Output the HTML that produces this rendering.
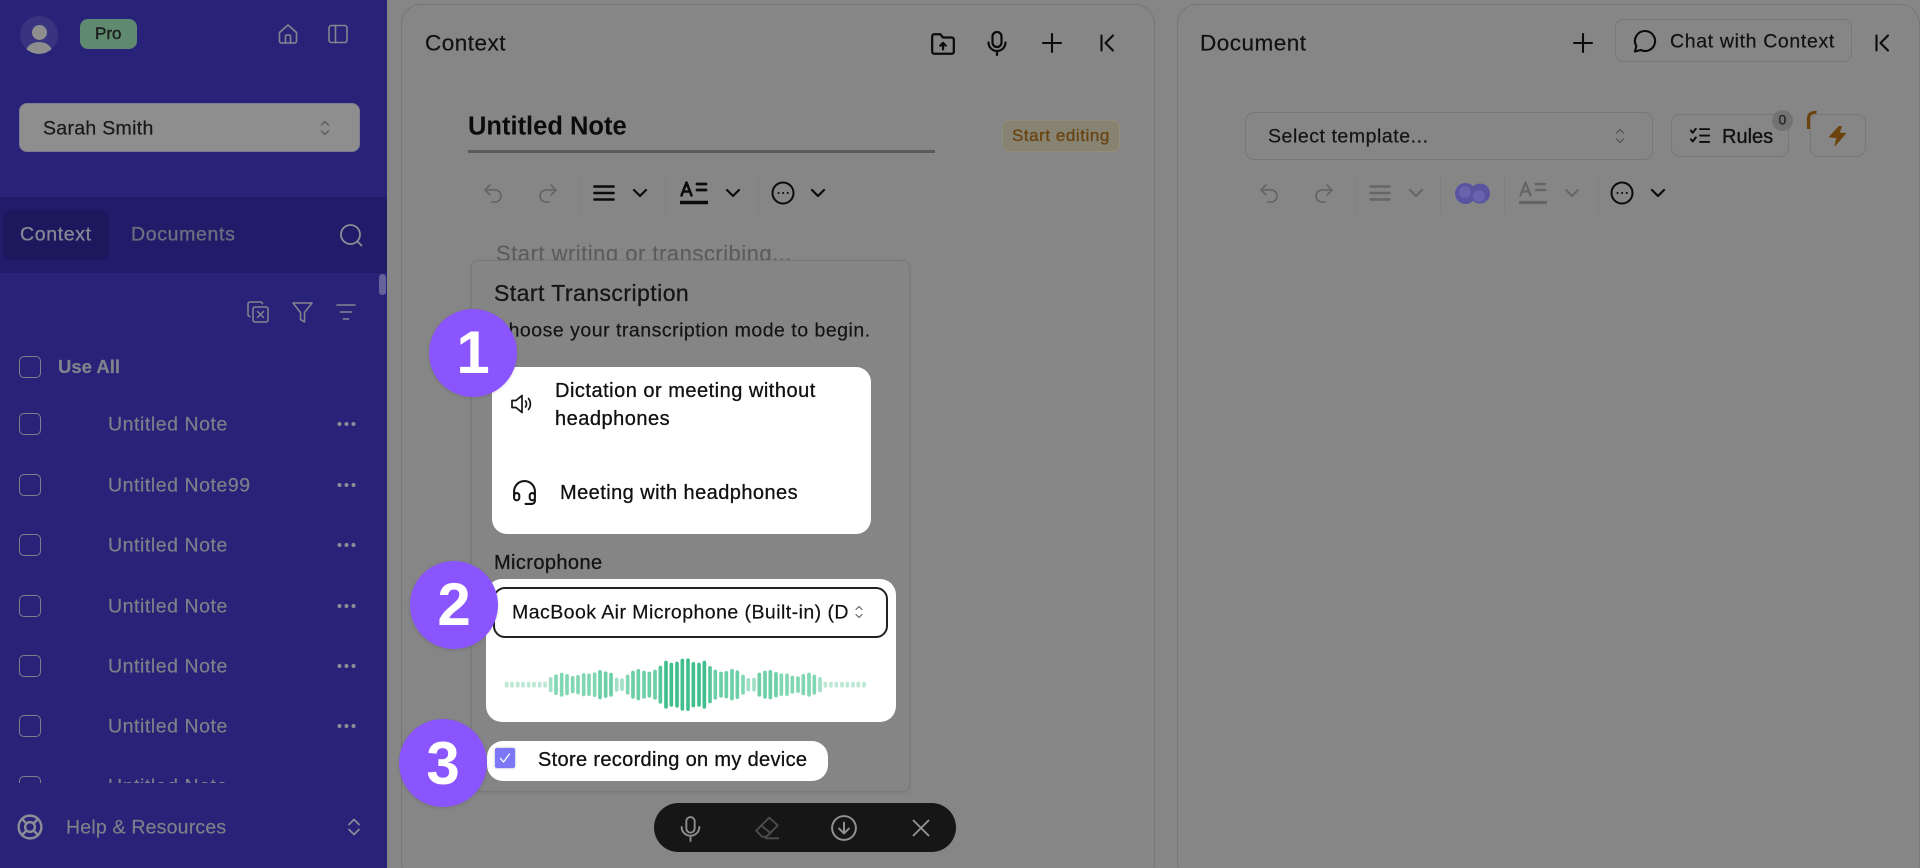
<!DOCTYPE html>
<html lang="en"><head><meta charset="utf-8"><title>Transcription</title>
<style>
html,body{margin:0;padding:0;width:1920px;height:868px;overflow:hidden;background:#868686}
body{position:relative;font-family:"Liberation Sans",sans-serif;color:#141414}
.t{position:absolute;white-space:nowrap;transform:translateY(-50%);line-height:1.2;-webkit-text-stroke:.2px currentColor}
.b{position:absolute;box-sizing:border-box}
svg.i{position:absolute;width:24px;height:24px;overflow:visible;fill:none;stroke-linecap:round;stroke-linejoin:round}
.side{color:#7f7f8a;font-size:19.5px;letter-spacing:.55px}
.cb{position:absolute;left:19px;width:22px;height:22px;box-sizing:border-box;border:1.5px solid #7f7f8a;border-radius:5px}
.num{position:absolute;width:88px;height:88px;border-radius:50%;background:#8a55fe;color:#fff;font-weight:700;font-size:60px;line-height:88px;text-align:center;box-shadow:0 1px 3px rgba(0,0,0,.12)}
.sep{position:absolute;top:175px;height:38px;width:1px;background:#7f7f7f}
</style></head><body>

<!-- sidebar -->
<div class="b" style="left:0;top:0;width:387px;height:868px;background:#282378"></div>
<div class="b" style="left:20px;top:16px;width:38px;height:38px;border-radius:50%;background:#38347f;overflow:hidden">
  <div class="b" style="left:11.5px;top:9px;width:15px;height:15px;border-radius:50%;background:#8e8e8e"></div>
  <div class="b" style="left:6px;top:26px;width:26px;height:20px;border-radius:50%;background:#8e8e8e"></div>
</div>
<div class="b" style="left:80px;top:19px;width:57px;height:30px;border-radius:8px;background:#5f8a6f"></div>
<div class="t" style="left:95px;top:34px;font-size:17px;color:#1c1c1c;-webkit-text-stroke:.4px #1c1c1c">Pro</div>
<svg class="i" style="left:276px;top:22px" viewBox="0 0 24 24" stroke="#85858f" stroke-width="1.6"><path d="M3.5 10.500 12 3l8.500 7.500V19a2 2 0 0 1-2 2h-13a2 2 0 0 1-2-2z"/><path d="M9.500 21v-7a1 1 0 0 1 1-1h3a1 1 0 0 1 1 1v7"/></svg>
<svg class="i" style="left:326px;top:22px" viewBox="0 0 24 24" stroke="#85858f" stroke-width="1.6"><rect x="3" y="3.5" width="18" height="17" rx="2.5"/><path d="M9.500 3.500v17"/></svg>

<div class="b" style="left:19px;top:103px;width:341px;height:49px;border-radius:8px;background:#8e8e8e;border:1px solid #7c7c90"></div>
<div class="t" style="left:43px;top:128.5px;font-size:19.5px;letter-spacing:.3px;color:#181818">Sarah Smith</div>
<svg class="i" style="left:313px;top:116px" viewBox="0 0 24 24" stroke="#505050" stroke-width="1.2"><path d="M8.500 9 12 5.500 15.500 9M8.500 15l3.500 3.500 3.500-3.500"/></svg>

<div class="b" style="left:0;top:197px;width:387px;height:76px;background:#201c6a"></div>
<div class="b" style="left:3px;top:210px;width:106px;height:50px;border-radius:9px;background:#1c185e"></div>
<div class="t side" style="left:20px;top:235px;-webkit-text-stroke:.35px #868694;color:#868694;letter-spacing:.65px">Context</div>
<div class="t side" style="left:131px;top:235px;-webkit-text-stroke:.35px #6d6d80;color:#6d6d80;letter-spacing:.65px">Documents</div>
<svg class="i" style="left:339px;top:223px" viewBox="0 0 24 24" stroke="#8d8d98" stroke-width="1.8"><circle cx="11.5" cy="11.5" r="9.5"/><path d="m18.500 18.500 4 4"/></svg>
<div class="b" style="left:379px;top:274px;width:7px;height:21px;border-radius:4px;background:#66639c"></div>

<svg class="i" style="left:246px;top:300px" viewBox="0 0 24 24" stroke="#85858f" stroke-width="1.5"><path d="M4 16.500c-1 0-2-1-2-2V4c0-1.100 1-2 2-2h10.500c1 0 1.800.7 2 1.700"/><rect x="7" y="7" width="15" height="15" rx="2"/><path d="m11.500 11.500 6 6M17.500 11.500l-6 6"/></svg>
<svg class="i" style="left:290px;top:300px" viewBox="0 0 24 24" stroke="#85858f" stroke-width="1.5"><path d="M3 3h19l-7.500 9.500V22l-4-2.500v-7z"/></svg>
<svg class="i" style="left:334px;top:300px" viewBox="0 0 24 24" stroke="#85858f" stroke-width="1.6"><path d="M3 5h18M6.500 12h11M9.500 19h5"/></svg>

<div class="cb" style="top:356px"></div>
<div class="t" style="left:58px;top:367px;font-size:18.5px;font-weight:700;color:#82828c">Use All</div>

<div class="cb" style="top:413px"></div><div class="t side" style="left:108px;top:425px">Untitled Note</div>
<div class="cb" style="top:474px"></div><div class="t side" style="left:108px;top:486px">Untitled Note99</div>
<div class="cb" style="top:534px"></div><div class="t side" style="left:108px;top:546px">Untitled Note</div>
<div class="cb" style="top:595px"></div><div class="t side" style="left:108px;top:607px">Untitled Note</div>
<div class="cb" style="top:655px"></div><div class="t side" style="left:108px;top:667px">Untitled Note</div>
<div class="cb" style="top:715px"></div><div class="t side" style="left:108px;top:727px">Untitled Note</div>

<svg style="position:absolute;left:336px;top:415px;width:22px;height:320px" viewBox="0 0 22 320" fill="#8d8d98">
<circle cx="3.5" cy="9" r="2"/><circle cx="10.5" cy="9" r="2"/><circle cx="17.5" cy="9" r="2"/>
<circle cx="3.5" cy="70" r="2"/><circle cx="10.5" cy="70" r="2"/><circle cx="17.5" cy="70" r="2"/>
<circle cx="3.5" cy="130" r="2"/><circle cx="10.5" cy="130" r="2"/><circle cx="17.5" cy="130" r="2"/>
<circle cx="3.5" cy="191" r="2"/><circle cx="10.5" cy="191" r="2"/><circle cx="17.5" cy="191" r="2"/>
<circle cx="3.5" cy="251" r="2"/><circle cx="10.5" cy="251" r="2"/><circle cx="17.5" cy="251" r="2"/>
<circle cx="3.5" cy="311" r="2"/><circle cx="10.5" cy="311" r="2"/><circle cx="17.5" cy="311" r="2"/>
</svg>

<!-- clipped next row -->
<div class="b" style="left:0;top:776px;width:387px;height:7px;overflow:hidden">
  <div class="cb" style="top:0"></div>
  <div class="t side" style="left:108px;top:11px">Untitled Note</div>
</div>

<svg class="i" style="left:17px;top:814px;width:26px;height:26px" viewBox="0 0 24 24" stroke="#8d8d98" stroke-width="2.2"><circle cx="12" cy="12" r="10.5"/><circle cx="12" cy="12" r="4.5"/><path d="m4.500 4.500 4.300 4.300M19.500 4.500l-4.300 4.300M4.500 19.500l4.300-4.300M19.500 19.500l-4.300-4.300"/></svg>
<div class="t side" style="left:66px;top:827.5px;letter-spacing:.2px">Help &amp; Resources</div>
<svg class="i" style="left:342px;top:815px" viewBox="0 0 24 24" stroke="#8d8d98" stroke-width="1.7"><path d="M7 9.500 12 4.500l5 5M7 14.500l5 5 5-5"/></svg>

<!-- panels -->
<div class="b" style="left:401px;top:4px;width:754px;height:880px;border:1px solid #777;border-radius:20px"></div>
<div class="b" style="left:1177px;top:4px;width:743px;height:880px;border:1px solid #777;border-radius:20px"></div>

<!-- context header -->
<div class="t" style="left:425px;top:43px;font-size:22.5px;letter-spacing:.5px;color:#111">Context</div>
<svg class="i" style="left:930px;top:31px;width:26px;height:26px" viewBox="0 0 24 24" stroke="#0b0b0b" stroke-width="2.1"><path d="M2 5c0-1 .8-2 2-2h5.500l2.500 3h8c1.200 0 2 .9 2 2v11c0 1.100-.8 2-2 2H4c-1.200 0-2-.9-2-2z"/><path d="M12 17v-6M9.500 13.500 12 11l2.500 2.500"/></svg>
<svg class="i" style="left:985px;top:31px" viewBox="0 0 24 24" stroke="#0b0b0b" stroke-width="2.2"><rect x="7.5" y="1" width="9" height="15" rx="4.5"/><path d="M3.500 11.500a8.500 8.500 0 0 0 17 0M12 20v4"/></svg>
<svg class="i" style="left:1040px;top:31px" viewBox="0 0 24 24" stroke="#0b0b0b" stroke-width="2.1"><path d="M12 3v18M3 12h18"/></svg>
<svg class="i" style="left:1095px;top:31px" viewBox="0 0 24 24" stroke="#0b0b0b" stroke-width="2.1"><path d="M6.500 4.500v15M18 4.500 10.500 12l7.500 7.500"/></svg>

<div class="t" style="left:468px;top:127px;font-size:25.5px;font-weight:700;color:#0b0b0b;-webkit-text-stroke:0">Untitled Note</div>
<div class="b" style="left:468px;top:150px;width:467px;height:3px;background:#5a5a5a"></div>
<div class="b" style="left:1002px;top:120px;width:118px;height:32px;border-radius:7px;background:#878372;border:1px solid #918e76"></div>
<div class="t" style="left:1012px;top:136px;font-size:17px;letter-spacing:.55px;color:#6a430f;-webkit-text-stroke:.3px #6a430f">Start editing</div>

<!-- left toolbar -->
<svg class="i" style="left:481px;top:181px" viewBox="0 0 24 24" stroke="#656565" stroke-width="1.7"><path d="M9 4 4 9l5 5"/><path d="M4 9h10a6 6 0 0 1 0 12h-3"/></svg>
<svg class="i" style="left:536px;top:181px" viewBox="0 0 24 24" stroke="#656565" stroke-width="1.7"><path d="m15 4 5 5-5 5"/><path d="M20 9H10a6 6 0 0 0 0 12h3"/></svg>
<div class="sep" style="left:579px"></div>
<svg class="i" style="left:592px;top:181px" viewBox="0 0 24 24" stroke="#0b0b0b" stroke-width="2.6" style="stroke-linecap:butt"><path d="M2.500 5.500h19M2.500 12h19M2.500 18.500h19"/></svg>
<svg class="i" style="left:628px;top:181px" viewBox="0 0 24 24" stroke="#0b0b0b" stroke-width="2.2"><path d="m6 9 6 6 6-6"/></svg>
<div class="sep" style="left:665px"></div>
<svg class="i" style="left:680px;top:179px;width:28px;height:28px" viewBox="0 0 28 28" stroke="#0b0b0b"><path stroke-width="2.5" d="m1.500 16.500 5-13 5 13M3.500 12.500h6" /><path stroke-width="2.8" d="M17 5h9M17 11h9" /><path stroke-width="3.4" stroke-linecap="butt" d="M0 23.500h28"/></svg>
<svg class="i" style="left:721px;top:181px" viewBox="0 0 24 24" stroke="#0b0b0b" stroke-width="2.2"><path d="m6 9 6 6 6-6"/></svg>
<div class="sep" style="left:758px"></div>
<svg class="i" style="left:771px;top:181px" viewBox="0 0 24 24" stroke="#0b0b0b" stroke-width="2"><circle cx="12" cy="12" r="10.5"/><path stroke-width="2" stroke-dasharray=".1 4.500" d="M7.500 12h9.500"/></svg>
<svg class="i" style="left:806px;top:181px" viewBox="0 0 24 24" stroke="#0b0b0b" stroke-width="2.2"><path d="m6 9 6 6 6-6"/></svg>

<div class="b" style="left:496px;top:241px;width:360px;height:19px;overflow:hidden"><div style="font-size:22px;line-height:26px;letter-spacing:.5px;color:#5c5c5c;white-space:nowrap;-webkit-text-stroke:.15px #5c5c5c">Start writing or transcribing...</div></div>

<!-- popup -->
<div class="b" style="left:471px;top:260px;width:439px;height:532px;background:#858585;border:1px solid #797979;border-radius:8px;box-shadow:0 1px 4px rgba(0,0,0,.08)"></div>
<div class="t" style="left:494px;top:293.5px;font-size:23px;letter-spacing:.45px;color:#161616;-webkit-text-stroke:.3px #161616">Start Transcription</div>
<div class="t" style="left:494px;top:330.5px;font-size:19.5px;letter-spacing:.5px;color:#141414">Choose your transcription mode to begin.</div>

<div class="b" style="left:492px;top:367px;width:379px;height:167px;background:#fff;border-radius:15px"></div>
<svg class="i" style="left:510px;top:392px" viewBox="0 0 24 24" stroke="#141414" stroke-width="1.7"><path d="M2 8.500v7h4l6 5v-17l-6 5z"/><path d="M15.500 9a5 5 0 0 1 0 6M18.500 6.500a9 9 0 0 1 0 11"/></svg>
<div class="t" style="left:555px;top:391px;font-size:20px;letter-spacing:.5px;color:#111;-webkit-text-stroke:.3px #111">Dictation or meeting without</div>
<div class="t" style="left:555px;top:418.5px;font-size:20px;letter-spacing:.5px;color:#111;-webkit-text-stroke:.3px #111">headphones</div>
<svg class="i" style="left:512px;top:480px;width:25px;height:25px" viewBox="0 0 24 24" stroke="#141414" stroke-width="2"><path d="M2 15v-4a10 10 0 0 1 20 0v4"/><rect x="2" y="12.5" width="5" height="7" rx="2.5"/><rect x="17" y="12.5" width="5" height="7" rx="2.5"/><path d="M22 19v1a3 3 0 0 1-3 3h-6"/></svg>
<div class="t" style="left:560px;top:492.5px;font-size:20px;letter-spacing:.44px;color:#111;-webkit-text-stroke:.3px #111">Meeting with headphones</div>

<div class="t" style="left:494px;top:562.5px;font-size:20px;letter-spacing:.4px;color:#141414;-webkit-text-stroke:.3px #141414">Microphone</div>
<div class="b" style="left:486px;top:579px;width:410px;height:143px;background:#fff;border-radius:16px"></div>
<div class="b" style="left:493px;top:587px;width:395px;height:51px;background:#fff;border:2px solid #222;border-radius:12px"></div>
<div class="t" style="left:512px;top:613px;font-size:19.5px;letter-spacing:.45px;color:#111">MacBook Air Microphone (Built-in) (D</div>
<svg class="i" style="left:847px;top:600px" viewBox="0 0 24 24" stroke="#666" stroke-width="1.2"><path d="M9 9.500 12 6.500 15 9.500M9 14.500l3 3 3-3"/></svg>

<svg style="position:absolute;left:490px;top:640px;width:400px;height:90px" viewBox="0 0 1200 270" fill="none" stroke-width="11" stroke-linecap="round">
<path stroke="#bce8d5" d="M50 130.500V137.500M66 130.500V137.500M83 130.500V137.500M99 130.500V137.500M116 130.500V137.500M132 130.500V137.500M149 130.500V137.500M165 130.500V137.500M1006 130.500V137.500M1023 130.500V137.500M1039 130.500V137.500M1056 130.500V137.500M1072 130.500V137.500M1089 130.500V137.500M1105 130.500V137.500M1122 130.500V137.500"/>
<path stroke="#a0e1c6" d="M182 116.500V151.500M380 118.500V149.500M396 120.500V147.500M775 119.500V148.500M792 118.500V149.500M990 116.500V151.500"/>
<path stroke="#82d7b3" d="M198 108.500V159.500M215 103.500V164.500M231 107.500V160.500M248 113.500V154.500M264 110.500V157.500M281 104.500V163.500M297 105.500V162.500M314 102.500V165.500M413 109.500V158.500M759 109.500V158.500M874 105.500V162.500M891 105.500V162.500M907 112.500V155.500M924 114.500V153.500M940 107.500V160.500M957 103.500V164.500M973 109.500V158.500"/>
<path stroke="#6ccfa5" d="M330 95.500V172.500M347 99.500V168.500M363 103.500V164.500M429 97.500V170.500M445 92.500V175.500M462 97.500V170.500M478 100.500V167.500M495 94.500V173.500M676 94.500V173.500M693 100.500V167.500M709 98.500V169.500M726 92.500V175.500M742 96.500V171.500M808 103.500V164.500M825 97.500V170.500M841 95.500V172.500M858 101.500V166.500"/>
<path stroke="#55c89b" d="M511 82.500V185.500M660 83.500V184.500"/>
<path stroke="#40bf8d" d="M528 67.500V200.500M544 73.500V194.500M561 70.500V197.500M577 61.500V206.500M594 60.500V207.500M610 71.500V196.500M627 73.500V194.500M643 67.500V200.500"/>
</svg>

<div class="b" style="left:487px;top:741px;width:341px;height:40px;background:#fff;border-radius:16px"></div>
<div class="b" style="left:495px;top:748px;width:20px;height:20px;background:#7c78f5;border-radius:2px;box-shadow:0 0 2px rgba(80,80,160,.5)"></div>
<svg class="i" style="left:499px;top:752px;width:12px;height:12px" viewBox="0 0 24 24" stroke="#fff" stroke-width="2.6"><path d="m3 13 6 7L21 4"/></svg>
<div class="t" style="left:538px;top:759.5px;font-size:20px;letter-spacing:.33px;color:#111;-webkit-text-stroke:.3px #111">Store recording on my device</div>

<div class="num" style="left:429px;top:309px">1</div>
<div class="num" style="left:410px;top:561px">2</div>
<div class="num" style="left:399px;top:719px;line-height:90px">3</div>

<!-- bottom bar -->
<div class="b" style="left:654px;top:803px;width:302px;height:49px;background:#161616;border-radius:25px"></div>
<svg class="i" style="left:678px;top:816px;width:25px;height:25px" viewBox="0 0 24 24" stroke="#8f8f8f" stroke-width="1.8"><rect x="8" y="1" width="8" height="15" rx="4"/><path d="M3.500 10.500a8.500 8.500 0 0 0 17 0M12 19v5"/></svg>
<svg class="i" style="left:754px;top:815px;width:26px;height:26px" viewBox="0 0 24 24" stroke="#4c4c4c" stroke-width="1.7"><path d="M2 14.500 14 2.500l8 7-10.500 10.500h-4z"/><path d="m6.500 9.500 9 7.500M11 21.500h11.500"/></svg>
<svg class="i" style="left:831px;top:815px;width:26px;height:26px" viewBox="0 0 24 24" stroke="#939393" stroke-width="1.8"><circle cx="12" cy="12" r="11"/><path d="M12 7v10M7.500 12.500 12 17l4.500-4.500"/></svg>
<svg class="i" style="left:909px;top:816px" viewBox="0 0 24 24" stroke="#939393" stroke-width="1.9"><path d="m4.500 4.500 15 15M19.500 4.500l-15 15"/></svg>

<!-- document header -->
<div class="t" style="left:1200px;top:43px;font-size:22.5px;letter-spacing:.5px;color:#111">Document</div>
<svg class="i" style="left:1571px;top:31px" viewBox="0 0 24 24" stroke="#0b0b0b" stroke-width="2.1"><path d="M12 3v18M3 12h18"/></svg>
<div class="b" style="left:1615px;top:19px;width:237px;height:43px;border:1px solid #777;border-radius:8px"></div>
<svg class="i" style="left:1633px;top:29px" viewBox="0 0 24 24" stroke="#0b0b0b" stroke-width="2.1"><path d="M12 2a10 10 0 1 1-4.300 19L2 22.500l1.300-5.500A10 10 0 0 1 12 2z"/></svg>
<div class="t" style="left:1670px;top:41.5px;font-size:19.5px;letter-spacing:.65px;color:#111">Chat with Context</div>
<svg class="i" style="left:1870px;top:31px" viewBox="0 0 24 24" stroke="#0b0b0b" stroke-width="2.1"><path d="M6.500 4.500v15M18 4.500 10.500 12l7.500 7.500"/></svg>

<div class="b" style="left:1245px;top:112px;width:408px;height:48px;border:1px solid #777;border-radius:9px"></div>
<div class="t" style="left:1268px;top:136.5px;font-size:19.5px;letter-spacing:.55px;color:#141414">Select template...</div>
<svg class="i" style="left:1608px;top:124px" viewBox="0 0 24 24" stroke="#505050" stroke-width="1.2"><path d="M8.500 9 12 5.500 15.500 9M8.500 15l3.500 3.500 3.500-3.500"/></svg>

<div class="b" style="left:1671px;top:114px;width:118px;height:43px;border:1px solid #777;border-radius:9px"></div>
<svg class="i" style="left:1689px;top:125px;width:22px;height:22px" viewBox="0 0 24 24" stroke="#0b0b0b" stroke-width="2"><path d="m2 6 2 2.500L7.500 4M2 15.500 4 18l3.500-4.500M12 4.500h10M12 11.500h10M12 18.500h10"/></svg>
<div class="t" style="left:1722px;top:137px;font-size:20px;color:#111;-webkit-text-stroke:.35px #111">Rules</div>
<div class="b" style="left:1772px;top:110px;width:21px;height:21px;border-radius:50%;background:#737373"></div>
<div class="t" style="left:1778.5px;top:120px;font-size:14px;color:#222">0</div>

<div class="b" style="left:1810px;top:114px;width:56px;height:43px;border:1px solid #777;border-radius:9px"></div>
<svg style="position:absolute;left:1804px;top:110px;width:16px;height:22px" viewBox="0 0 16 22" fill="none" stroke="#6a430f" stroke-width="3.2"><path d="M12.500 2.500C7 2 4.500 4.500 4.500 9v10"/></svg>
<svg style="position:absolute;left:1829px;top:126px;width:17px;height:20px;overflow:visible" viewBox="0 0 17 20" fill="#6a430f" stroke="#6a430f" stroke-width="1" stroke-linejoin="round"><path d="M10 .5 .5 11l7.500.5L6 19.500 16.500 7.500 10 7l2.500-6.500z"/></svg>

<!-- right toolbar -->
<svg class="i" style="left:1257px;top:181px" viewBox="0 0 24 24" stroke="#656565" stroke-width="1.7"><path d="M9 4 4 9l5 5"/><path d="M4 9h10a6 6 0 0 1 0 12h-3"/></svg>
<svg class="i" style="left:1312px;top:181px" viewBox="0 0 24 24" stroke="#656565" stroke-width="1.7"><path d="m15 4 5 5-5 5"/><path d="M20 9H10a6 6 0 0 0 0 12h3"/></svg>
<div class="sep" style="left:1355px"></div>
<svg class="i" style="left:1368px;top:181px" viewBox="0 0 24 24" stroke="#656565" stroke-width="2.4"><path d="M2.500 5.500h19M2.500 12h19M2.500 18.500h19"/></svg>
<svg class="i" style="left:1404px;top:181px" viewBox="0 0 24 24" stroke="#656565" stroke-width="2"><path d="m6 9 6 6 6-6"/></svg>
<div class="sep" style="left:1440px"></div>
<svg style="position:absolute;left:1455px;top:183px;width:35px;height:21px" viewBox="0 0 35 21"><circle cx="10.5" cy="10.5" r="10.5" fill="#59549f"/><circle cx="25" cy="10.5" r="10" fill="#59549f"/><circle cx="10" cy="9" r="6" fill="#6863ad"/><circle cx="24" cy="13" r="6" fill="#6863ad"/></svg>
<div class="sep" style="left:1504px"></div>
<svg class="i" style="left:1519px;top:179px;width:28px;height:28px" viewBox="0 0 28 28" stroke="#656565"><path stroke-width="2.3" d="m1.500 16.500 5-13 5 13M3.500 12.500h6" /><path stroke-width="2.6" d="M17 5h9M17 11h9" /><path stroke-width="3.2" stroke-linecap="butt" d="M0 23.500h28"/></svg>
<svg class="i" style="left:1560px;top:181px" viewBox="0 0 24 24" stroke="#656565" stroke-width="2"><path d="m6 9 6 6 6-6"/></svg>
<div class="sep" style="left:1598px"></div>
<svg class="i" style="left:1610px;top:181px" viewBox="0 0 24 24" stroke="#0b0b0b" stroke-width="2"><circle cx="12" cy="12" r="10.5"/><path stroke-width="2" stroke-dasharray=".1 4.500" d="M7.500 12h9.500"/></svg>
<svg class="i" style="left:1646px;top:181px" viewBox="0 0 24 24" stroke="#0b0b0b" stroke-width="2.2"><path d="m6 9 6 6 6-6"/></svg>

</body></html>
